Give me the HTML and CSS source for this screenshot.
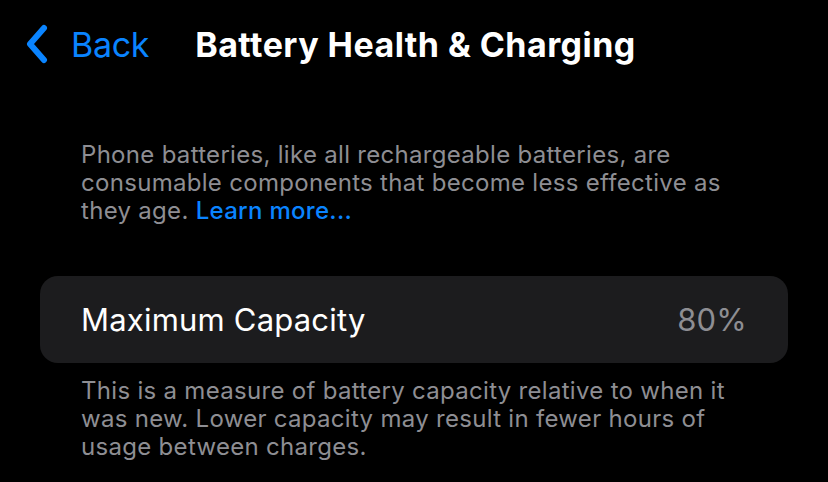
FILE: index.html
```html
<!DOCTYPE html>
<html lang="en">
<head>
  <meta charset="UTF-8">
  <meta name="viewport" content="width=device-width, initial-scale=1.0">
  <title>Battery Health &amp; Charging</title>
  <link rel="stylesheet" href="styles.css">
</head>
<body>
  <div id="nav">
    <a class="back" href="#">
      <svg class="chevron" width="24" height="40" viewBox="0 0 24 40">
        <path d="M19 4 L5 20 L19 36" fill="none" stroke="#0a84ff" stroke-width="6" stroke-linecap="round" stroke-linejoin="round"/>
      </svg>
      <span>Back</span>
    </a>
    <h1>Battery Health &amp; Charging</h1>
  </div>

  <div id="content">
    <p class="note intro">Phone batteries, like all rechargeable batteries, are consumable components that become less effective as they age. <a href="#">Learn more...</a></p>

    <div class="card">
      <span class="label">Maximum Capacity</span>
      <span class="value">80%</span>
    </div>

    <p class="note footer">This is a measure of battery capacity relative to when it was new. Lower capacity may result in fewer hours of usage between charges.</p>
  </div>
</body>
</html>
```

FILE: styles.css
```css
body {
  margin: 0;
  padding: 0;
  background-color: #000;
  color: #fff;
  font-family: Inter, "Noto Sans", sans-serif;
  width: 828px;
  height: 482px;
  overflow: hidden;
}
#nav {
  display: flex;
  align-items: center;
  height: 88px;
  padding-left: 25px;
}
.back {
  display: flex;
  align-items: center;
  gap: 22px;
  color: #0a84ff;
  text-decoration: none;
  font-size: 34px;
  letter-spacing: -0.3px;
}
h1 {
  margin: 0 0 0 46px;
  font-size: 34px;
  font-weight: 700;
  letter-spacing: 0.45px;
}
#content {
  padding: 0 40px;
}
.note {
  margin: 0;
  padding: 0 41px;
  color: #8e8e93;
  font-size: 24px;
  line-height: 28px;
  letter-spacing: 0.3px;
}
.note a {
  color: #0a84ff;
  text-decoration: none;
  font-weight: 500;
}
.intro {
  margin-top: 53px;
}
.card {
  display: flex;
  justify-content: space-between;
  align-items: center;
  margin-top: 51px;
  height: 87px;
  padding: 0 41px;
  background-color: #1c1c1e;
  border-radius: 18px;
  font-size: 31px;
  letter-spacing: 0.2px;
}
.value {
  color: #8e8e93;
}
.footer {
  margin-top: 14px;
}
```
